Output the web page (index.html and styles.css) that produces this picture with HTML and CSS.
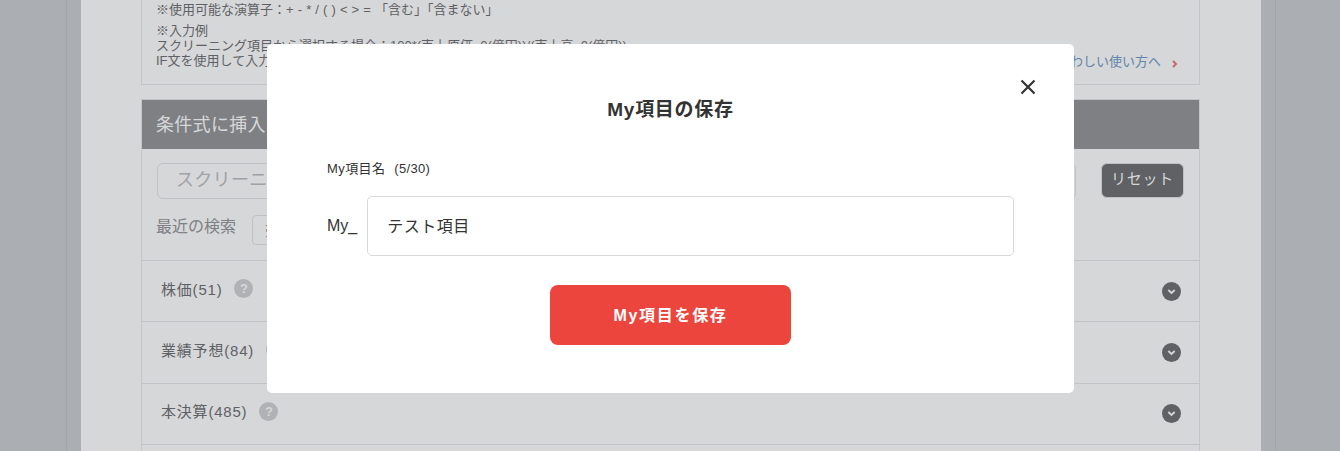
FILE: index.html
```html
<!DOCTYPE html>
<html lang="ja">
<head>
    <meta charset="UTF-8">
    <meta name="viewport" content="width=device-width, initial-scale=1.0">
    <title>My項目の保存</title>
    <link rel="stylesheet" href="styles.css">
</head>
<body>
    <div class="page">
        <div class="content">
            <div class="notes">
                <p class="operators">※使用可能な演算子：+ - * / ( ) &lt; &gt; = 「含む」「含まない」</p>
                <div class="example">
                    <p>※入力例</p>
                    <p>スクリーニング項目から選択する場合：100*(売上原価_0(億円))/(売上高_0(億円))</p>
                    <div class="example-last">
                        <p>IF文を使用して入力する場合：IF(売上高_0(億円)&gt;0,1,0)</p>
                        <a class="help-link">くわしい使い方へ<svg class="link-arrow" viewBox="0 0 6 8"><path d="M1 1l3 3-3 3" fill="none" stroke="#c9686a" stroke-width="2"/></svg></a>
                    </div>
                </div>
            </div>

            <div class="section">
                <h2 class="section-title">条件式に挿入</h2>
                <div class="search-row">
                    <div class="search-box">スクリーニング</div>
                    <button class="reset-button">リセット</button>
                </div>
                <div class="recent-row">
                    <span class="recent-label">最近の検索</span>
                    <span class="recent-chip">売上高</span>
                </div>
                <div class="group-row">
                    <span class="group-name">株価(51)</span>
                    <span class="hint">?</span>
                    <span class="toggle"><svg viewBox="0 0 19 19"><path d="M6.3 8l3.2 3 3.2-3" fill="none" stroke="#d6d7d9" stroke-width="1.8"/></svg></span>
                </div>
                <div class="group-row">
                    <span class="group-name">業績予想(84)</span>
                    <span class="hint">?</span>
                    <span class="toggle"><svg viewBox="0 0 19 19"><path d="M6.3 8l3.2 3 3.2-3" fill="none" stroke="#d6d7d9" stroke-width="1.8"/></svg></span>
                </div>
                <div class="group-row">
                    <span class="group-name">本決算(485)</span>
                    <span class="hint">?</span>
                    <span class="toggle"><svg viewBox="0 0 19 19"><path d="M6.3 8l3.2 3 3.2-3" fill="none" stroke="#d6d7d9" stroke-width="1.8"/></svg></span>
                </div>
                <div class="group-row"></div>
            </div>
        </div>
    </div>

    <!-- 保存モーダル -->
    <div class="modal-layer">
        <div class="modal">
            <button class="modal-close" aria-label="閉じる">
                <svg viewBox="0 0 16 16"><path d="M1.5 1.5l13 13M14.5 1.5l-13 13" fill="none" stroke="#333" stroke-width="2.2"/></svg>
            </button>
            <h1 class="modal-title">My項目の保存</h1>
            <div class="field-label">My項目名<span class="field-count">(5/30)</span></div>
            <div class="field-row">
                <span class="field-prefix">My_</span>
                <input class="field-input" type="text" value="テスト項目">
            </div>
            <button class="save-button">My項目を保存</button>
        </div>
    </div>
</body>
</html>
```

FILE: styles.css
```css
* {
    margin: 0;
    padding: 0;
    box-sizing: border-box;
}

body {
    font-family: "Liberation Sans", "Noto Sans CJK JP", sans-serif;
    background: #abaeb2;
    height: 451px;
    overflow: hidden;
    position: relative;
    color: #5f6164;
}

button {
    font-family: inherit;
    border: none;
}

/* 背面のページ（オーバーレイ込みの色） */
.page {
    width: 1210px;
    margin: 0 65px 0 66px;
    border-left: 1px solid #a3a5a9;
    border-right: 1px solid #a3a5a9;
    padding: 0 14px;
    height: 451px;
    overflow: hidden;
}

.content {
    background: #d6d7d9;
    height: 100%;
    padding: 0 61px 0 60px;
}

.notes {
    height: 85px;
    padding: 2px 14px 0;
    border: 1px solid #c4c5c8;
    border-top: none;
    font-size: 13px;
    line-height: 15px;
}

.operators {
    word-spacing: 0.5px;
}

.example {
    margin-top: 6px;
}

.example-last {
    display: flex;
    justify-content: space-between;
}

.help-link {
    color: #6284ab;
    margin-top: 1px;
    padding-right: 7px;
}

.link-arrow {
    width: 6px;
    height: 8px;
    margin-left: 11px;
    vertical-align: -2px;
}

.section {
    margin-top: 14px;
    border: 1px solid #c4c5c8;
    border-bottom: none;
}

.section-title {
    height: 49px;
    line-height: 50px;
    padding-left: 14px;
    background: #7e8084;
    color: #d6d7d9;
    font-size: 18px;
    font-weight: 400;
    letter-spacing: 0.3px;
}

.search-row {
    display: flex;
    justify-content: space-between;
    padding: 14px 15px 0;
}

.search-box {
    width: 919px;
    height: 36px;
    padding-left: 18px;
    border: 1px solid #c0c1c4;
    border-radius: 6px;
    font-size: 18px;
    letter-spacing: 0.3px;
    line-height: 32px;
    color: #a0a2a5;
}

.reset-button {
    width: 83px;
    height: 35px;
    border-radius: 6px;
    border: 1px solid #c0c1c4;
    background: #5f6164;
    color: #d6d7d9;
    font-size: 15px;
    letter-spacing: 0.8px;
    padding-bottom: 6px;
}

.recent-row {
    display: flex;
    align-items: center;
    height: 61px;
    padding: 0 14px;
    font-size: 16px;
    color: #7e8084;
}

.recent-label {
    margin-bottom: 9px;
}

.recent-chip {
    height: 30px;
    margin-left: 16px;
    padding: 0 12px;
    border: 1px solid #c0c1c4;
    border-radius: 4px;
    line-height: 28px;
    font-size: 14px;
}

.group-row {
    display: flex;
    align-items: center;
    height: 61.33px;
    padding: 0 18px 0 19px;
    border-top: 1px solid #c2c3c6;
}

.group-name {
    font-size: 15px;
    letter-spacing: 0.8px;
    padding-bottom: 6px;
}

.hint {
    width: 19px;
    height: 19px;
    margin-left: 12px;
    margin-bottom: 5px;
    border-radius: 50%;
    background: #b1b2b5;
    color: #d6d7d9;
    font-size: 13px;
    font-weight: 700;
    line-height: 19px;
    text-align: center;
}

.toggle {
    width: 19px;
    height: 19px;
    margin-left: auto;
    border-radius: 50%;
    background: #5f6164;
}

.toggle svg {
    display: block;
    width: 19px;
    height: 19px;
}

/* モーダル */
.modal-layer {
    position: absolute;
    top: 44px;
    left: 267px;
}

.modal {
    position: relative;
    width: 807px;
    height: 349px;
    padding: 53px 60px 0;
    background: #fff;
    border-radius: 5px;
    color: #333;
}

.modal-close {
    position: absolute;
    top: 35px;
    right: 38px;
    width: 16px;
    height: 16px;
    background: none;
    cursor: pointer;
}

.modal-close svg {
    display: block;
    width: 16px;
    height: 16px;
}

.modal-title {
    font-size: 19px;
    font-weight: 700;
    letter-spacing: 0.7px;
    line-height: 26px;
    text-align: center;
}

.field-label {
    margin-top: 37px;
    font-size: 13px;
    letter-spacing: 0.4px;
    line-height: 18px;
}

.field-count {
    margin-left: 9px;
    letter-spacing: 0.3px;
}

.field-row {
    display: flex;
    align-items: center;
    gap: 10px;
    margin-top: 18px;
}

.field-prefix {
    font-size: 16px;
}

.field-input {
    flex: 1;
    height: 60px;
    padding: 0 19px 3px;
    border: 1px solid #d8d8d8;
    border-radius: 5px;
    font-family: inherit;
    font-size: 16px;
    letter-spacing: 0.5px;
    color: #333;
    outline: none;
}

.save-button {
    display: block;
    width: 241px;
    height: 60px;
    margin: 29px auto 0;
    padding-bottom: 3px;
    background: #ec453d;
    border-radius: 8px;
    color: #fff;
    font-size: 16px;
    font-weight: 700;
    letter-spacing: 1.7px;
    cursor: pointer;
}
```
